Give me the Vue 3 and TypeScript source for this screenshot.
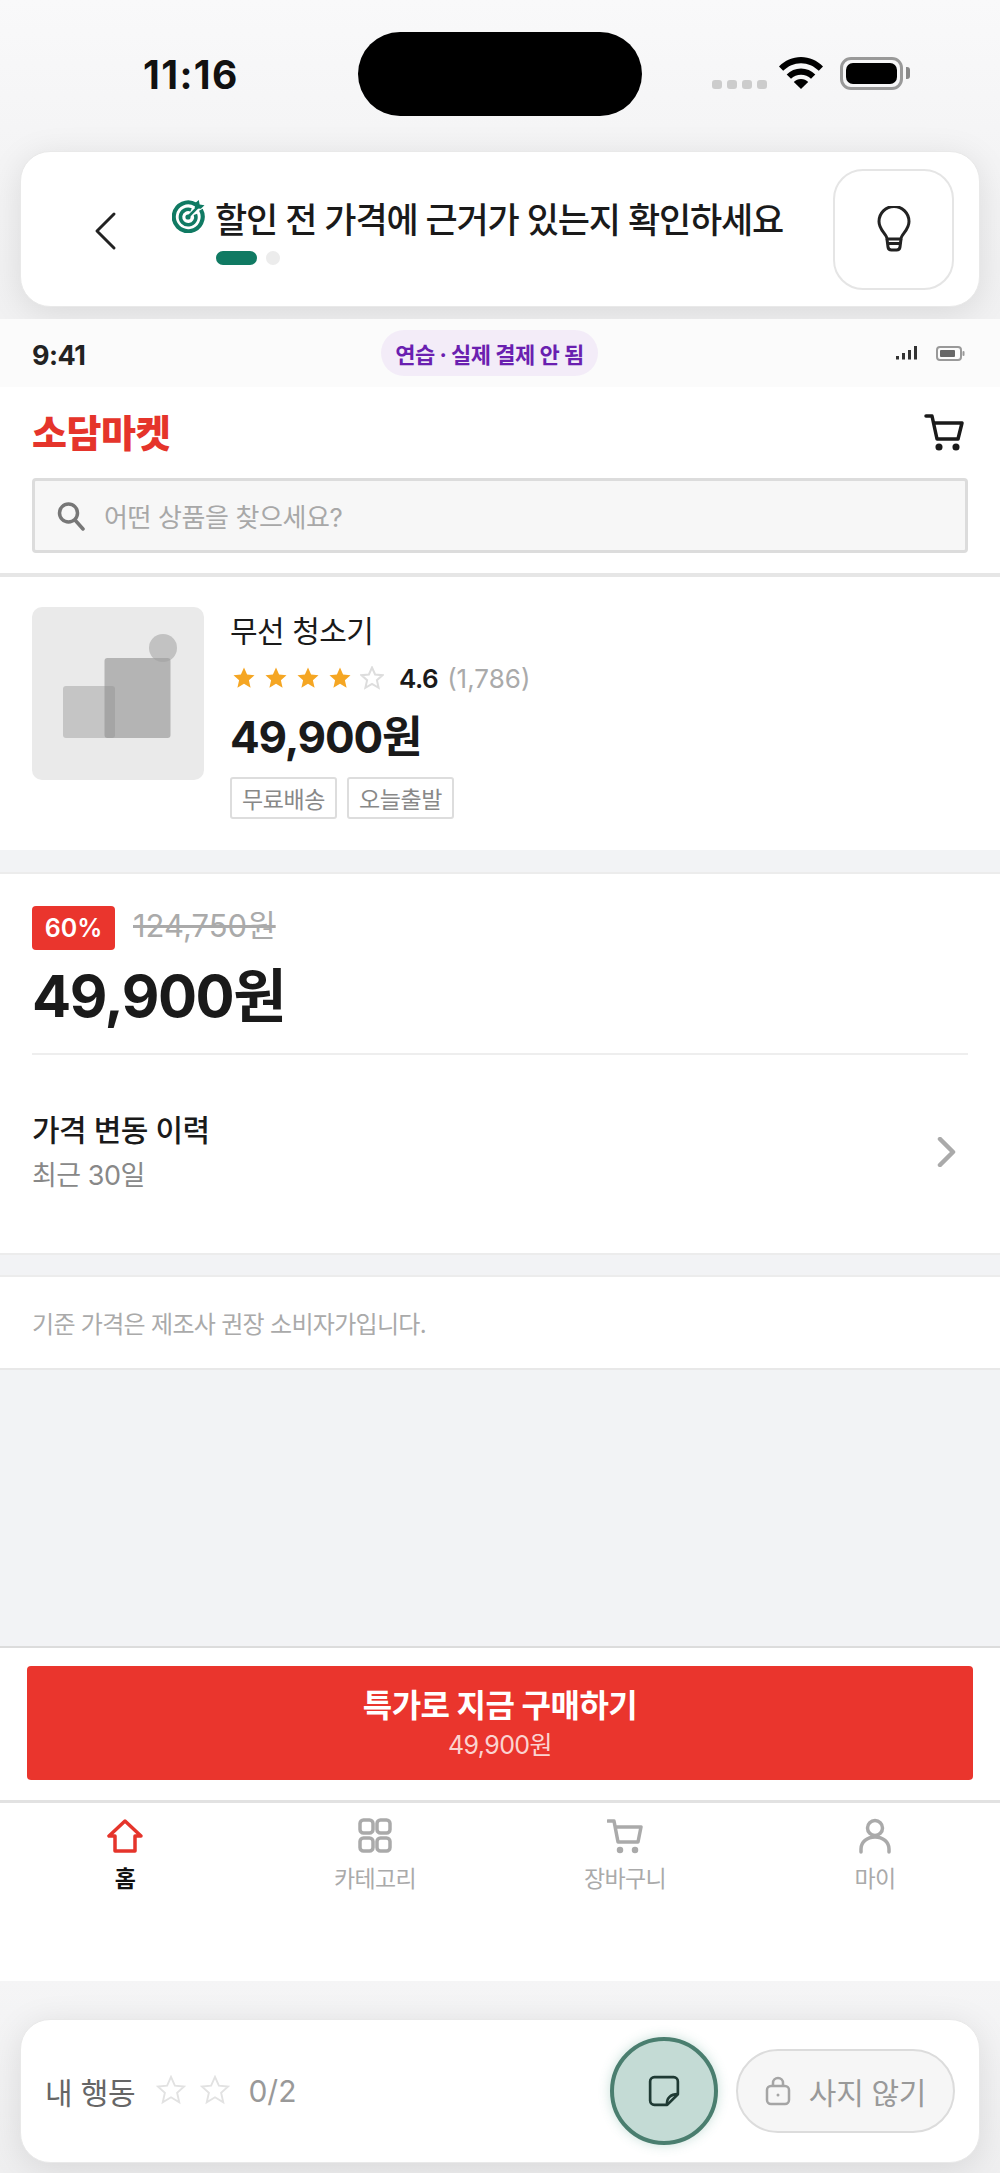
<script setup lang="ts">
const tabs = [
  { label: '홈', active: true, icon: 'home' },
  { label: '카테고리', active: false, icon: 'grid' },
  { label: '장바구니', active: false, icon: 'cart' },
  { label: '마이', active: false, icon: 'user' },
]
const stars = [true, true, true, true, false]
const starPath = 'M12 1.5l3.1 7 7.4.7-5.6 5 1.7 7.6L12 17.8l-6.6 4 1.7-7.6-5.6-5 7.4-.7z'
</script>

<template>
  <div class="root">
    <section class="top">
      <div class="sys">
        <span class="clock">11:16</span>
        <span class="island"></span>
        <div class="sys-right">
          <span class="cell"><i></i><i></i><i></i><i></i></span>
          <svg class="wifi" viewBox="0 0 44 32" width="44" height="32">
            <path d="M22 0C13.5 0 6 3.5 0 9.5l4.2 4.3C9 9 15.2 6.2 22 6.2S35 9 39.8 13.8L44 9.5C38 3.5 30.500 0 22 0z" fill="#000"/>
            <path d="M22 11.500c-5.500 0-10.500 2.300-14.300 6l4.300 4.300c2.700-2.600 6.200-4.100 10-4.100s7.300 1.500 10 4.100l4.300-4.300c-3.800-3.700-8.800-6-14.300-6z" fill="#000"/>
            <path d="M22 22c-2.800 0-5.300 1.100-7.200 2.900L22 32l7.200-7.100C27.300 23.100 24.800 22 22 22z" fill="#000"/>
          </svg>
          <span class="batt"><b></b></span><span class="nub"></span>
        </div>
      </div>
      <div class="coach card">
        <svg class="back" viewBox="0 0 24 40" width="24" height="40">
          <path d="M21 3L4 20l17 17" fill="none" stroke="#222" stroke-width="3" stroke-linecap="round" stroke-linejoin="round"/>
        </svg>
        <div class="coach-main">
          <div class="coach-title">
            <svg class="target" viewBox="0 0 32 32" width="33" height="33">
              <path d="M23 4.300A14 14 0 1 0 28 9.500" fill="none" stroke="#107a63" stroke-width="4"/>
              <path d="M18.500 9.600a7.500 7.500 0 1 0 4.200 4.300" fill="none" stroke="#107a63" stroke-width="3.500"/>
              <circle cx="15.500" cy="16.500" r="2.500" fill="#107a63"/>
              <path d="M15.500 16.500L26 6" stroke="#107a63" stroke-width="2.500"/>
              <path d="M22 8l.5-5 3.500-3 .8 4.300 4.700.7-3.500 3.500z" fill="#107a63"/>
            </svg>
            <span>할인 전 가격에 근거가 있는지 확인하세요</span>
          </div>
          <div class="dots"><i class="on"></i><i></i></div>
        </div>
        <button class="bulb" type="button">
          <svg viewBox="0 0 34 46" width="34" height="46" fill="none" stroke="#222" stroke-width="3" stroke-linejoin="round">
            <path d="M10 33c0-5-8-8.500-8-17.500a15 15 0 0 1 30 0c0 9-8 12.500-8 17.500z"/>
            <path d="M10 33l1 8a3.500 3.500 0 0 0 3.500 3h5a3.500 3.500 0 0 0 3.500-3l1-8" />
            <path d="M10.500 37.500h13" />
          </svg>
        </button>
      </div>
    </section>

    <section class="app">
      <div class="inner-status">
        <span class="t941">9:41</span>
        <span class="practice">연습 · 실제 결제 안 됨</span>
        <div class="inner-right">
          <svg viewBox="0 0 22 14" width="22" height="14"><g fill="#333"><rect x="0" y="10" width="3" height="3.500"/><rect x="6" y="7" width="3" height="6.500"/><rect x="12" y="4" width="3" height="9.500"/><rect x="18" y="0" width="3" height="13.500"/></g></svg>
          <svg viewBox="0 0 29 15" width="29" height="15"><rect x="1" y="1" width="24" height="13" rx="3" fill="none" stroke="#999" stroke-width="2"/><rect x="4" y="4" width="15" height="7" rx="1" fill="#666"/><rect x="26.500" y="5" width="2" height="5" rx="1" fill="#999"/></svg>
        </div>
      </div>

      <header class="head">
        <div class="brand-row">
          <span class="brand">소담마켓</span>
          <svg viewBox="0 0 42 40" width="42" height="40" fill="none" stroke="#1a1a1a" stroke-width="3.500" stroke-linecap="round" stroke-linejoin="round">
            <path d="M2 3h6l5 23h21l4-16H10"/>
            <circle cx="15" cy="34" r="1.800" fill="#1a1a1a"/><circle cx="32" cy="34" r="1.800" fill="#1a1a1a"/>
          </svg>
        </div>
        <div class="search">
          <svg viewBox="0 0 28 30" width="28" height="30" fill="none" stroke="#777" stroke-width="3.500" stroke-linecap="round">
            <circle cx="11.500" cy="12" r="9"/><path d="M18 19l8 9"/>
          </svg>
          <span>어떤 상품을 찾으세요?</span>
        </div>
      </header>

      <section class="product">
        <div class="thumb">
          <svg viewBox="0 0 172 173" width="172" height="173">
            <rect x="72.500" y="51" width="66" height="80" rx="3" fill="#b4b4b4"/>
            <rect x="31" y="79" width="52" height="52" rx="3" fill="#8e8e8e" fill-opacity=".4"/>
            <circle cx="131" cy="41" r="14" fill="#a0a0a0" fill-opacity=".55"/>
          </svg>
        </div>
        <div class="info">
          <div class="name">무선 청소기</div>
          <div class="rating">
            <svg v-for="(s, i) in stars" :key="i" viewBox="0 0 24 24" width="24" height="24">
              <path :d="starPath" :fill="s ? '#f5a623' : 'none'" :stroke="s ? 'none' : '#ddd'" stroke-width="2"/>
            </svg>
            <b>4.6</b><span>(1,786)</span>
          </div>
          <div class="pprice">49,900원</div>
          <div class="tags"><span>무료배송</span><span>오늘출발</span></div>
        </div>
      </section>

      <section class="price">
        <div class="was"><span class="off">60%</span><s>124,750원</s></div>
        <div class="now">49,900원</div>
        <div class="history">
          <div>
            <div class="h1">가격 변동 이력</div>
            <div class="h2">최근 30일</div>
          </div>
          <svg viewBox="0 0 20 30" width="20" height="30"><path d="M3 2l13 13L3 28" fill="none" stroke="#aaa" stroke-width="4.500" stroke-linecap="round" stroke-linejoin="round"/></svg>
        </div>
      </section>

      <section class="note">기준 가격은 제조사 권장 소비자가입니다.</section>

      <div class="spacer"></div>

      <div class="cta-wrap">
        <button class="cta" type="button">
          <span class="c1">특가로 지금 구매하기</span>
          <span class="c2">49,900원</span>
        </button>
      </div>

      <nav class="tabs">
        <div v-for="t in tabs" :key="t.label" class="tab" :class="{ active: t.active }">
          <svg viewBox="0 0 36 36" width="36" height="36" fill="none" :stroke="t.active ? '#e5342b' : '#aaa'" stroke-width="3.500" stroke-linejoin="round" stroke-linecap="round">
            <path v-if="t.icon === 'home'" d="M18 3L2 18h6v15h20V18h6z"/>
            <g v-else-if="t.icon === 'grid'">
              <rect x="3" y="2" width="13" height="13" rx="3.500"/><rect x="20" y="2" width="13" height="13" rx="3.500"/>
              <rect x="3" y="20" width="13" height="13" rx="3.500"/><rect x="20" y="20" width="13" height="13" rx="3.500"/>
            </g>
            <g v-else-if="t.icon === 'cart'">
              <path d="M1 3h6l4 21h20l3-15H9"/>
              <circle cx="13" cy="32" r="1.500" fill="#aaa"/><circle cx="28" cy="32" r="1.500" fill="#aaa"/>
            </g>
            <g v-else>
              <circle cx="18" cy="10" r="7.500"/><path d="M4 34v-3c0-7 6-12 14-12s14 5 14 12v3"/>
            </g>
          </svg>
          <span>{{ t.label }}</span>
        </div>
      </nav>
    </section>

    <section class="bottom">
      <div class="actions card">
        <span class="my">내 행동</span>
        <svg v-for="i in 2" :key="i" class="ostar" viewBox="0 0 24 24" width="30" height="30">
          <path :d="starPath" fill="none" stroke="#e2e2e2" stroke-width="1.500"/>
        </svg>
        <span class="count">0/2</span>
        <button class="memo" type="button">
          <svg viewBox="0 0 30 30" width="32" height="32" fill="none" stroke="#1f3a34" stroke-width="2.500" stroke-linejoin="round">
            <path d="M18 28H6a4 4 0 0 1-4-4V6a4 4 0 0 1 4-4h18a4 4 0 0 1 4 4v12z"/>
            <path d="M18 28c-1-6 3-10 10-10" />
          </svg>
        </button>
        <button class="nobuy" type="button">
          <svg viewBox="0 0 26 30" width="26" height="30" fill="none" stroke="#a5a5a5" stroke-width="2.500">
            <rect x="2" y="10" width="22" height="18" rx="4"/><path d="M8 10V7a5 5 0 0 1 10 0v3"/><circle cx="13" cy="19" r="1.500" fill="#a5a5a5" stroke="none"/>
          </svg>
          <span>사지 않기</span>
        </button>
      </div>
    </section>
  </div>
</template>

<style>
html, body { margin: 0; padding: 0; background: #f3f3f4; }
</style>

<style scoped>
* { box-sizing: border-box; }
.root {
  width: 1000px;
  height: 2173px;
  display: flex;
  flex-direction: column;
  overflow: hidden;
  font-family: Inter, "Noto Sans CJK KR", sans-serif;
  color: #1a1a1a;
  background: #f3f3f4;
}
button { font-family: inherit; }
.top {
  height: 319px;
  flex: none;
  overflow: hidden;
  background: linear-gradient(#f9f9fa, #f4f4f5 50%, #f1f1f2);
  padding: 0 20px;
}
.sys {
  height: 151px;
  display: grid;
  grid-template-columns: 338px 284px 1fr;
  align-items: start;
  padding-top: 32px;
}
.clock {
  padding-left: 123px;
  margin-top: 19px;
  font-size: 39px;
  line-height: 47px;
  font-weight: 700;
  letter-spacing: 1.4px;
  color: #111;
}
.island { height: 84px; border-radius: 42px; background: #000; }
.sys-right { display: flex; align-items: flex-start; padding: 25px 0 0 70px; position: relative; }
.cell { display: flex; gap: 5px; margin-top: 23px; width: 67px; }
.cell i { width: 10px; height: 9px; border-radius: 3px; background: #ccc; }
.wifi { flex: none; }
.batt {
  width: 63px;
  height: 33px;
  margin-left: 17px;
  border: 3px solid #999;
  border-radius: 11px;
  padding: 3px;
  flex: none;
  display: flex;
}
.batt b { flex: 1; background: #000; border-radius: 7px; }
.nub { width: 4px; height: 12px; margin: 10px 0 0 3px; background: #888; border-radius: 0 3px 3px 0; flex: none; }

.card {
  background: #fff;
  border: 1px solid #e9e9e9;
  box-shadow: 0 6px 34px rgba(0, 0, 0, 0.1);
}
.coach {
  height: 156px;
  border-radius: 30px;
  display: flex;
  align-items: center;
  padding: 0 25px 0 72px;
}
.back { flex: none; margin-top: 3px; }
.coach-main { flex: 1; min-width: 0; padding: 0 0 0 55px; display: flex; flex-direction: column; margin-top: 5px; }
.coach-title { display: flex; align-items: center; font-size: 35px; line-height: 44px; font-weight: 500; letter-spacing: -1.18px; color: #1a1a1a; gap: 10px; white-space: nowrap; }
.target { flex: none; margin-top: -7px; }
.dots { display: flex; gap: 9px; margin: 9px 0 0 44px; align-items: center; }
.dots i { width: 14px; height: 14px; border-radius: 7px; background: #ececec; }
.dots i.on { width: 41px; background: #107a63; }
.bulb {
  width: 121px;
  height: 121px;
  flex: none;
  background: #fff;
  border: 2px solid #e5e5e5;
  border-radius: 30px;
  padding: 0;
  display: flex;
  align-items: center;
  justify-content: center;
}

.app { flex: none; height: 1662px; background: #f2f3f5; display: flex; flex-direction: column; }
.inner-status {
  height: 68px;
  flex: none;
  background: #fbfbfb;
  display: flex;
  align-items: center;
  padding: 0 35px 0 32px;
}
.t941 { font-size: 27px; font-weight: 700; width: 349px; margin-top: 4px; color: #222; letter-spacing: -0.5px; }
.practice {
  height: 46px;
  width: 217px;
  border-radius: 23px;
  background: #f3ecf8;
  color: #6a1fb0;
  font-size: 22px;
  font-weight: 700;
  letter-spacing: -0.5px;
  display: flex;
  align-items: center;
  justify-content: center;
  white-space: nowrap;
  margin-top: -1px;
}
.inner-right { margin-left: auto; display: flex; align-items: center; gap: 18px; }

.head { background: #fff; height: 190px; flex: none; padding: 0 32px; border-bottom: 4px solid #e6e6e6; }
.brand-row { display: flex; justify-content: space-between; align-items: center; height: 91px; padding: 0 2px 0 0; }
.brand { font-size: 38px; line-height: 46px; font-weight: 800; color: #e5342b; letter-spacing: -0.4px; }
.search {
  height: 75px;
  border: 3px solid #dcdcdc;
  border-radius: 4px;
  background: #f7f7f7;
  display: flex;
  align-items: center;
  gap: 19px;
  padding: 0 0 0 22px;
  font-size: 26px;
  color: #a8a8a8;
  letter-spacing: -0.4px;
}

.product { background: #fff; flex: none; height: 273px; display: flex; gap: 26px; padding: 30px 32px 0; }
.thumb { width: 172px; height: 173px; border-radius: 10px; background: #eaeaea; flex: none; overflow: hidden; }
.info { display: flex; flex-direction: column; }
.name { font-size: 30px; line-height: 36px; margin-top: 6px; letter-spacing: -0.5px; }
.rating { display: flex; align-items: center; gap: 8px; height: 36px; margin: 11px 0 0 2px; }
.rating b { font-size: 26px; font-weight: 600; margin-left: 7px; letter-spacing: -0.5px; }
.rating span { font-size: 26px; color: #aaa; margin-left: 1px; }
.pprice { font-size: 44px; line-height: 54px; font-weight: 700; letter-spacing: -1.2px; margin-top: 14px; }
.tags { display: flex; gap: 10px; margin-top: 13px; }
.tags span {
  width: 107px;
  height: 42px;
  border: 2px solid #ddd;
  border-radius: 3px;
  font-size: 23px;
  color: #888;
  display: flex;
  align-items: center;
  justify-content: center;
  letter-spacing: -0.4px;
}

.price { margin-top: 22px; background: #fff; flex: none; height: 383px; padding: 32px 32px 0; border-top: 2px solid #ececec; border-bottom: 2px solid #ececec; }
.was { display: flex; align-items: center; gap: 18px; height: 44px; }
.off {
  width: 83px;
  height: 44px;
  background: #ea352d;
  border-radius: 4px;
  color: #fff;
  font-size: 25px;
  font-weight: 600;
  display: flex;
  align-items: center;
  justify-content: center;
}
.was s { font-size: 31px; line-height: 38px; color: #aaa; letter-spacing: 0; margin-top: -4px; }
.now { font-size: 58px; line-height: 74px; font-weight: 700; letter-spacing: -1.4px; margin-top: 9px; padding-bottom: 20px; border-bottom: 2px solid #eeeeee; }
.history { display: flex; justify-content: space-between; align-items: center; padding: 56px 11px 0 0; }
.h1 { font-size: 30px; line-height: 38px; font-weight: 500; letter-spacing: -0.5px; }
.h2 { font-size: 27px; line-height: 34px; color: #888; margin-top: 10px; letter-spacing: -0.5px; }

.note { margin-top: 20px; background: #fff; flex: none; height: 95px; padding: 0 32px; display: flex; align-items: center; font-size: 24px; color: #aaa; letter-spacing: -0.7px; border-top: 2px solid #ececec; border-bottom: 2px solid #e8e8e8; }
.spacer { flex: 1; }

.cta-wrap { background: #fff; flex: none; height: 157px; border-top: 2px solid #dcdcdc; border-bottom: 3px solid #e2e2e2; padding: 18px 27px 0; }
.cta {
  width: 100%;
  height: 114px;
  border: 0;
  border-radius: 4px;
  background: #ea352d;
  color: #fff;
  display: flex;
  flex-direction: column;
  align-items: center;
  justify-content: center;
  padding: 0;
}
.c1 { font-size: 32px; line-height: 40px; font-weight: 700; letter-spacing: -0.5px; }
.c2 { font-size: 25px; line-height: 30px; color: #fbd3d0; margin-top: 4px; letter-spacing: -0.6px; }

.tabs { background: #fff; flex: none; height: 178px; display: grid; grid-template-columns: repeat(4, 1fr); align-items: start; padding-top: 15px; }
.tab { display: flex; flex-direction: column; align-items: center; gap: 10px; font-size: 23px; line-height: 30px; color: #aaa; letter-spacing: -0.7px; }
.tab.active { color: #111; font-weight: 700; }

.bottom { flex: 1; padding: 38px 20px 0; background: linear-gradient(#f5f5f6, #efeff0); }
.actions { height: 144px; border-radius: 30px; display: flex; align-items: center; padding: 0 24px; }
.my { font-size: 30px; color: #666; margin-right: 21px; letter-spacing: -0.2px; }
.ostar { margin-right: 14px; margin-top: -2px; }
.count { font-size: 30px; color: #999; margin-left: 4px; }
.memo {
  margin-left: auto;
  width: 108px;
  height: 108px;
  border-radius: 50%;
  border: 4px solid #4a7e6f;
  background: #c4dbd5;
  box-shadow: 0 0 12px rgba(74, 150, 130, 0.3);
  display: flex;
  align-items: center;
  justify-content: center;
  padding: 0;
  margin-right: 18px;
}
.nobuy {
  width: 219px;
  height: 84px;
  border-radius: 42px;
  border: 2px solid #dcdcdc;
  background: #f6f6f6;
  display: flex;
  align-items: center;
  justify-content: center;
  gap: 18px;
  font-size: 30px;
  color: #999;
  padding: 0;
  letter-spacing: -0.3px;
}
</style>
